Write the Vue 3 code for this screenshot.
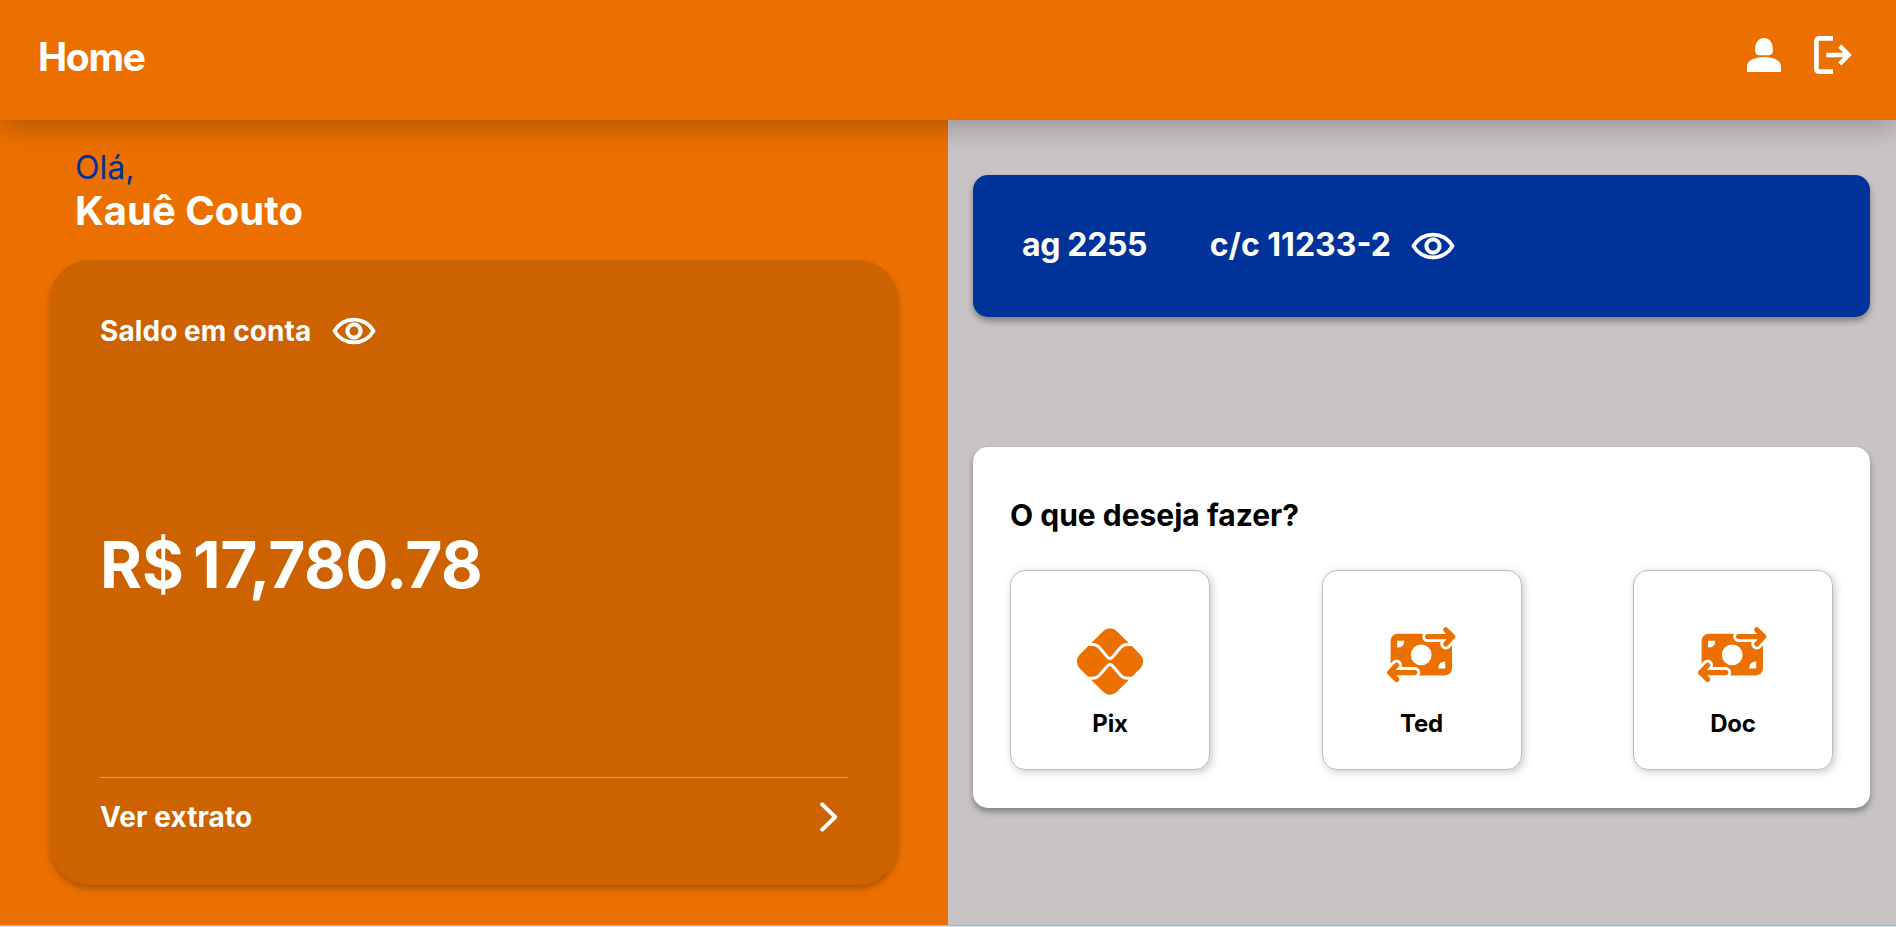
<script setup>
import { h } from 'vue'

const actions = [
  { label: 'Pix', icon: 'pix' },
  { label: 'Ted', icon: 'money' },
  { label: 'Doc', icon: 'money' },
]

const EyeIcon = () =>
  h('svg', { width: 44, height: 28, viewBox: '0 0 44 28', fill: 'none', stroke: '#fff' }, [
    h('path', {
      d: 'M2.4 14C6.8 6.8 13.6 2.6 22 2.6S37.2 6.8 41.6 14C37.2 21.2 30.4 25.4 22 25.4S6.8 21.2 2.4 14Z',
      'stroke-width': 3.7,
      'stroke-linejoin': 'round',
    }),
    h('circle', { cx: 22, cy: 14, r: 6.6, 'stroke-width': 4.1 }),
  ])
</script>

<template>
  <div class="page">
    <header class="topbar">
      <h1 class="title">Home</h1>
      <nav class="tools">
        <svg width="34" height="34" viewBox="0 0 34 34" fill="#fff">
          <path d="M17 0C22.2 0 25.8 4.2 25.9 11.5C26 15.5 24.6 17.2 22 17.2H12C9.4 17.2 8 15.5 8.1 11.5C8.2 4.2 11.8 0 17 0Z" />
          <path d="M0 34V28.5C0 22.5 7.5 19 17 19S34 22.5 34 28.5V34Z" />
        </svg>
        <svg width="38" height="38" viewBox="0 0 38 38" fill="none" stroke="#fff">
          <path d="M19 2.4H5.2Q2.4 2.4 2.4 5.2V32.8Q2.4 35.6 5.2 35.6H19" stroke-width="4.7" />
          <path d="M12.3 19H34M25.8 10.2L34.6 19L25.8 27.8" stroke-width="4.5" />
        </svg>
      </nav>
    </header>

    <main class="columns">
      <section class="left">
        <p class="hello">Olá,</p>
        <p class="name">Kauê Couto</p>
        <div class="balance">
          <div class="row">
            <span class="label">Saldo em conta</span>
            <EyeIcon />
          </div>
          <div class="amount">R$ <span class="digits">17,780.78</span></div>
          <div class="statement">
            <span class="label">Ver extrato</span>
            <svg width="18" height="30" viewBox="0 0 18 30" fill="none" stroke="#fff" stroke-width="4" stroke-linecap="round" stroke-linejoin="round">
              <path d="M2.2 2.4L15.2 15L2.2 27.6" />
            </svg>
          </div>
        </div>
      </section>

      <section class="right">
        <div class="account">
          <span class="ag">ag 2255</span>
          <span class="cc">c/c 11233-2</span>
          <EyeIcon />
        </div>
        <div class="panel">
          <h2 class="question">O que deseja fazer?</h2>
          <div class="actions">
            <div v-for="a in actions" :key="a.label" class="action">
              <svg v-if="a.icon === 'pix'" width="70" height="70" viewBox="0 0 70 70">
                <rect x="8.7" y="9.2" width="52.6" height="52.6" rx="9.8" fill="#ec7000" transform="rotate(45 35 35.5)" />
                <path d="M8 18.6H17.5Q21.5 18.6 24 21.1L32.6 31.2Q35 33.8 37.4 31.2L46 21.1Q48.5 18.6 52.5 18.6H62" fill="none" stroke="#fff" stroke-width="3" />
                <path d="M8 52.2H17.5Q21.5 52.2 24 49.7L32.6 39.8Q35 37.2 37.4 39.8L46 49.7Q48.5 52.2 52.5 52.2H62" fill="none" stroke="#fff" stroke-width="3" />
              </svg>
              <svg v-else width="70" height="70" viewBox="0.8 -0.4 70 70" fill="none">
                <rect x="4.4" y="7.4" width="61.4" height="41.6" rx="7" fill="#ec7000" />
                <circle cx="35" cy="28.4" r="10.4" fill="#fff" />
                <path d="M11 14.4H18Q18 21.2 11 21.2Z" fill="#fff" />
                <path d="M59 42H52Q52 35.2 59 35.2Z" fill="#fff" />
                <g stroke-linecap="round" stroke-linejoin="round">
                  <path d="M41.5 10.2H66.5M59.6 3.4L66.5 10.2L59.6 17.6" stroke="#fff" stroke-width="11" />
                  <path d="M28.5 46.2H3.5M10.4 53L3.5 46.2L10.4 38.8" stroke="#fff" stroke-width="11" />
                  <path d="M41.5 10.2H66.5M59.6 3.4L66.5 10.2L59.6 17.6" stroke="#ec7000" stroke-width="5.2" />
                  <path d="M28.5 46.2H3.5M10.4 53L3.5 46.2L10.4 38.8" stroke="#ec7000" stroke-width="5.2" />
                </g>
              </svg>
              <span class="caption">{{ a.label }}</span>
            </div>
          </div>
        </div>
      </section>
    </main>
    <div class="strip"></div>
  </div>
</template>

<style>
body { margin: 0; overflow: hidden; }
</style>

<style scoped>
.page { height: 927px; display: flex; flex-direction: column; font-family: Inter, "Liberation Sans", sans-serif; color: #fff; }
.page * { box-sizing: border-box; }
h1, h2, p { margin: 0; }
svg { display: block; flex: none; }
.topbar { height: 120px; flex: none; background: #ec7000; display: flex; justify-content: space-between; position: relative; z-index: 1; padding: 0 44px 0 38px; box-shadow: 0 8px 26px rgba(0, 0, 0, .23); }
.title { font-size: 39px; font-weight: 700; line-height: 48px; padding-top: 33px; letter-spacing: -1.3px; }
.tools { display: flex; gap: 33px; padding-top: 36px; }
.tools svg:first-child { margin-top: 2px; }
.columns { height: 805px; display: flex; flex: none; }
.left { width: 948px; background: #ec7000; padding: 29px 50px 0; }
.hello { font-size: 32px; line-height: 38px; color: #039; padding-left: 25px; }
.name { font-size: 40px; font-weight: 700; line-height: 48px; padding-left: 25px; }
.balance { margin-top: 25px; height: 625px; border-radius: 40px; background: #cc6200; padding: 50px; box-shadow: 0 4px 6px rgba(0, 0, 0, .25); display: flex; flex-direction: column; justify-content: space-between; }
.row { display: flex; align-items: center; gap: 21px; height: 42px; }
.label { font-size: 28px; font-weight: 700; line-height: 34px; letter-spacing: .08px; }
.amount { font-size: 64px; font-weight: 700; line-height: 77px; word-spacing: -6px; }
.digits { letter-spacing: -.5px; }
.statement { border-top: 1px solid #e59b59; display: flex; justify-content: space-between; align-items: center; padding: 20px 10px 0 0; height: 58px; }
.right { width: 948px; background: #c8c4c5; padding: 55px 26px 0 25px; }
.account { height: 142px; background: #039; border-radius: 15px; box-shadow: 0 4px 6px rgba(0, 0, 0, .35); display: flex; align-items: center; padding-left: 49px; font-size: 32px; font-weight: 700; line-height: 40px; }
.account span { position: relative; top: -1px; }
.ag { letter-spacing: -.35px; }
.cc { margin: 0 20px 0 62.5px; }
.panel { margin-top: 130px; height: 361px; background: #fff; border-radius: 15px; box-shadow: 0 4px 6px rgba(0, 0, 0, .35); padding: 50px 37px 0; color: #000; }
.question { font-size: 30px; font-weight: 700; line-height: 36px; }
.actions { display: flex; justify-content: space-between; margin-top: 37px; }
.action { width: 200px; height: 200px; border: 1px solid #bbb; border-radius: 15px; box-shadow: 2px 2px 8px rgba(0, 0, 0, .22); display: flex; flex-direction: column; align-items: center; padding-top: 55px; }
.caption { font-size: 24px; font-weight: 700; line-height: 30px; margin-top: 13px; letter-spacing: -.2px; }
.strip { height: 2px; background: #d0e8f0; border-top: 1px solid #a8b8bc; box-sizing: border-box; }
</style>
